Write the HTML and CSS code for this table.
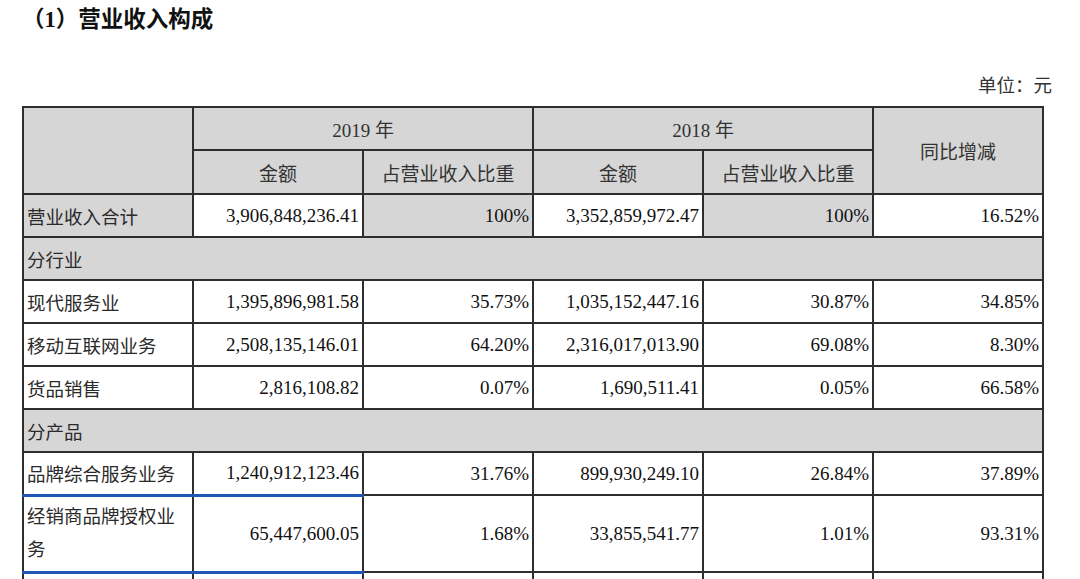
FILE: index.html
```html
<!DOCTYPE html>
<html lang="zh-CN">
<head>
<meta charset="utf-8">
<title>营业收入构成</title>
<link rel="stylesheet" href="styles.css">
</head>
<body>
<div class="page">
  <h2 class="title">（1）营业收入构成</h2>
  <div class="unit">单位：元</div>
  <table class="rev">
    <colgroup>
      <col class="c"><col class="c"><col class="c"><col class="c"><col class="c"><col class="c">
    </colgroup>
    <thead>
      <tr class="h1">
        <th rowspan="2" class="grey"></th>
        <th colspan="2" class="grey">2019 年</th>
        <th colspan="2" class="grey">2018 年</th>
        <th rowspan="2" class="grey">同比增减</th>
      </tr>
      <tr class="h2">
        <th class="grey">金额</th>
        <th class="grey">占营业收入比重</th>
        <th class="grey">金额</th>
        <th class="grey">占营业收入比重</th>
      </tr>
    </thead>
    <tbody>
      <tr class="r">
        <td class="lbl grey">营业收入合计</td>
        <td class="num">3,906,848,236.41</td>
        <td class="num grey">100%</td>
        <td class="num">3,352,859,972.47</td>
        <td class="num grey">100%</td>
        <td class="num">16.52%</td>
      </tr>
      <tr class="r sec">
        <td colspan="6" class="lbl grey">分行业</td>
      </tr>
      <tr class="r">
        <td class="lbl">现代服务业</td>
        <td class="num">1,395,896,981.58</td>
        <td class="num">35.73%</td>
        <td class="num">1,035,152,447.16</td>
        <td class="num">30.87%</td>
        <td class="num">34.85%</td>
      </tr>
      <tr class="r">
        <td class="lbl">移动互联网业务</td>
        <td class="num">2,508,135,146.01</td>
        <td class="num">64.20%</td>
        <td class="num">2,316,017,013.90</td>
        <td class="num">69.08%</td>
        <td class="num">8.30%</td>
      </tr>
      <tr class="r">
        <td class="lbl">货品销售</td>
        <td class="num">2,816,108.82</td>
        <td class="num">0.07%</td>
        <td class="num">1,690,511.41</td>
        <td class="num">0.05%</td>
        <td class="num">66.58%</td>
      </tr>
      <tr class="r sec">
        <td colspan="6" class="lbl grey">分产品</td>
      </tr>
      <tr class="r">
        <td class="lbl mark">品牌综合服务业务</td>
        <td class="num mark">1,240,912,123.46</td>
        <td class="num">31.76%</td>
        <td class="num">899,930,249.10</td>
        <td class="num">26.84%</td>
        <td class="num">37.89%</td>
      </tr>
      <tr class="r tall">
        <td class="lbl wrap mark">经销商品牌授权业务</td>
        <td class="num mark">65,447,600.05</td>
        <td class="num">1.68%</td>
        <td class="num">33,855,541.77</td>
        <td class="num">1.01%</td>
        <td class="num">93.31%</td>
      </tr>
      <tr class="r">
        <td class="lbl">&nbsp;</td>
        <td class="num"></td>
        <td class="num"></td>
        <td class="num"></td>
        <td class="num"></td>
        <td class="num"></td>
      </tr>
    </tbody>
  </table>
</div>
</body>
</html>
```

FILE: styles.css
```css
html, body {
  margin: 0;
  padding: 0;
  background: #ffffff;
}

body {
  font-family: "Liberation Serif", "Noto Sans CJK SC", serif;
  color: #1c1c1c;
  overflow: hidden;
}

.page {
  width: 1080px;
  height: 579px;
  box-sizing: border-box;
  padding: 5px 28px 0 22px;
  display: flex;
  flex-direction: column;
}

.title {
  margin: 0;
  font-size: 22.5px;
  line-height: 30px;
  font-weight: 700;
  color: #111;
  font-family: "Liberation Serif", "Noto Sans CJK SC", sans-serif;
}

.unit {
  margin-top: 39px;
  align-self: flex-end;
  font-size: 18.5px;
  line-height: 24px;
  color: #333;
}

.rev {
  margin-top: 8px;
  border-collapse: collapse;
  table-layout: fixed;
  width: 1022px;
  font-size: 19px;
}

.rev col.c {
  width: 170px;
}

.rev th,
.rev td {
  border: 2px solid #2e2e2e;
  padding: 0 3px;
  vertical-align: middle;
  overflow: hidden;
}

.rev th {
  font-weight: 400;
  text-align: center;
  color: #333;
}

.grey {
  background: #d6d6d6;
}

.h1 { height: 43px; }
.h2 { height: 44px; }
.r { height: 43px; }
.tall { height: 77px; }

.lbl {
  text-align: left;
  color: #2a2a2a;
  font-size: 18.5px;
}

.wrap {
  line-height: 33px;
  word-break: break-all;
}

.num {
  text-align: right;
  white-space: nowrap;
  color: #111;
}

.rev td.mark {
  border-bottom: 3px solid #1f57b8;
}
```
